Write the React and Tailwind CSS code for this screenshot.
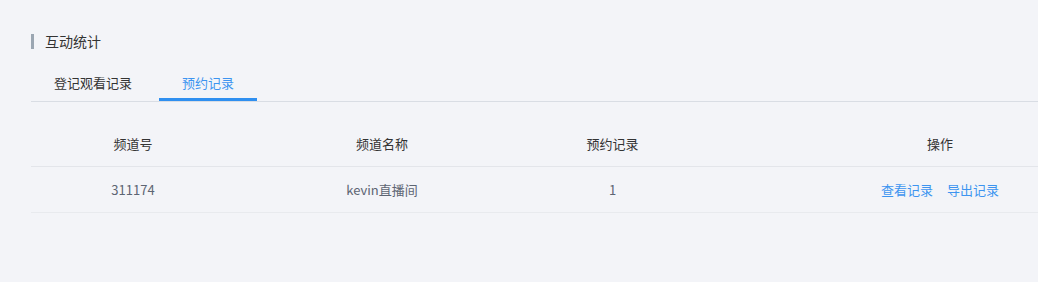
import React, { useState } from 'react';

const columns = [
  { key: 'id', label: '频道号', width: 'w-[204px]' },
  { key: 'name', label: '频道名称', width: 'w-[294px]' },
  { key: 'count', label: '预约记录', width: 'w-[167px]' },
  { key: 'ops', label: '操作', width: 'w-[488px]' },
];

const rows = [{ id: '311174', name: 'kevin直播间', count: '1' }];

export default function App() {
  const [tab, setTab] = useState('booking');

  const tabs = [
    { key: 'watch', label: '登记观看记录', width: 'w-[124px]' },
    { key: 'booking', label: '预约记录', width: 'w-[98px]' },
  ];

  return (
    <div
      className="w-[1038px] h-[282px] overflow-hidden bg-[#f3f4f8] pl-[31px] pt-[34px]"
      style={{ fontFamily: '"Noto Sans CJK SC", "Noto Sans", sans-serif' }}
    >
      {/* Section title */}
      <div className="flex items-center h-[15px]">
        <span className="w-[3px] h-[15px] bg-[#9ba6b2]" />
        <span className="ml-[11px] text-[14px] leading-[15px] text-[#333]">互动统计</span>
      </div>

      {/* Tabs */}
      <div className="mt-[12px] flex gap-[4px] border-b border-[#d9dde4]">
        {tabs.map(t => (
          <button
            key={t.key}
            onClick={() => setTab(t.key)}
            className={`${t.width} flex flex-col items-center text-[13px]`}
          >
            <span className={`pt-[12px] pb-[5px] leading-[20px] ${tab === t.key ? 'text-[#3d94f0]' : 'text-[#333]'}`}>
              {t.label}
            </span>
            <span className={`w-full h-[3px] ${tab === t.key ? 'bg-[#2f8ff0]' : 'bg-transparent'}`} />
          </button>
        ))}
      </div>

      {/* Table */}
      <div className="mt-[19px] w-[1153px] text-[13px]">
        <div className="flex h-[46px] items-center border-b border-[#e3e5ea] text-[#333]">
          {columns.map(c => (
            <div key={c.key} className={`${c.width} text-center`}>{c.label}</div>
          ))}
        </div>
        {rows.map(r => (
          <div key={r.id} className="flex h-[46px] items-center border-b border-[#e8eaee] text-[#5d6573]">
            <div className="w-[204px] text-center">{r.id}</div>
            <div className="w-[294px] text-center">{r.name}</div>
            <div className="w-[167px] text-center">{r.count}</div>
            <div className="w-[488px] flex justify-center gap-[14px] text-[#3d94f0]">
              <button>查看记录</button>
              <button>导出记录</button>
            </div>
          </div>
        ))}
      </div>
    </div>
  );
}
